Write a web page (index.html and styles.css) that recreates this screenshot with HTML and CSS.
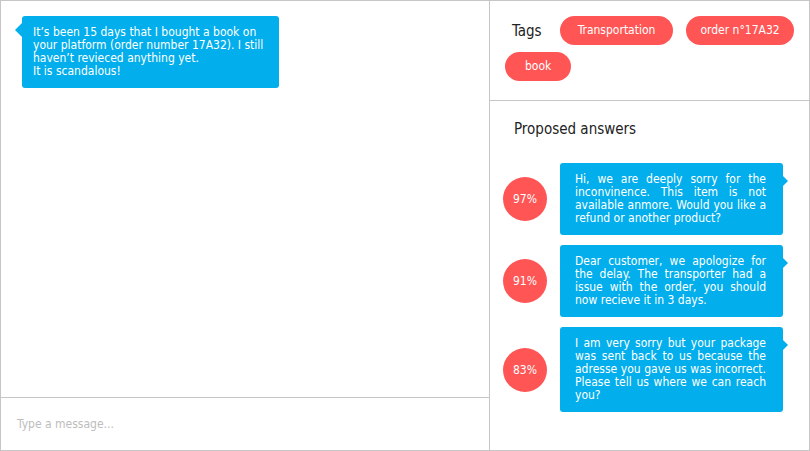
FILE: index.html
```html
<!DOCTYPE html>
<html>
<head>
<meta charset="utf-8">
<link rel="stylesheet" href="styles.css">
</head>
<body>
<div class="app">
  <section class="chat">
    <div class="messages">
      <div class="bubble incoming">It’s been 15 days that I bought a book on your platform (order number 17A32). I still haven’t revieced anything yet.<br>It is scandalous!</div>
    </div>
    <div class="composer">Type a message...</div>
  </section>
  <aside class="side">
    <div class="tags">
      <span class="tags-label">Tags</span>
      <span class="pill">Transportation</span>
      <span class="pill pill-tight">order n°17A32</span>
      <span class="pill pill-wide">book</span>
    </div>
    <div class="answers">
      <h2 class="answers-title">Proposed answers</h2>
      <div class="answer">
        <div class="score">97%</div>
        <div class="bubble outgoing">Hi, we are deeply sorry for the inconvinence. This item is not available anmore. Would you like a refund or another product?</div>
      </div>
      <div class="answer">
        <div class="score">91%</div>
        <div class="bubble outgoing">Dear customer, we apologize for the delay. The transporter had a issue with the order, you should now recieve it in 3 days.</div>
      </div>
      <div class="answer">
        <div class="score">83%</div>
        <div class="bubble outgoing">I am very sorry but your package was sent back to us because the adresse you gave us was incorrect. Please tell us where we can reach you?</div>
      </div>
    </div>
  </aside>
</div>
</body>
</html>
```
FILE: styles.css
```css
* { box-sizing: border-box; }
html, body { margin: 0; padding: 0; background: #fff; }
body {
  font-family: "DejaVu Sans Condensed", "DejaVu Sans", sans-serif;
  font-stretch: semi-condensed;
  font-size: 12px;
  color: #222;
}
.app {
  width: 810px;
  height: 451px;
  border: 1px solid #c6c6c6;
  display: grid;
  grid-template-columns: 489px 1fr;
}
.chat {
  border-right: 1px solid #c6c6c6;
  display: flex;
  flex-direction: column;
}
.messages {
  flex: 1;
  padding: 15px 0 0 21px;
}
.bubble {
  position: relative;
  background: #02aeeb;
  color: #fff;
  border-radius: 3px;
  line-height: 13px;
}
.incoming {
  width: 257px;
  padding: 10px 11px;
}
.incoming::before {
  content: "";
  position: absolute;
  left: -7px;
  top: 7px;
  border-style: solid;
  border-width: 7px 7px 7px 0;
  border-color: transparent #02aeeb transparent transparent;
}
.composer {
  height: 53px;
  border-top: 1px solid #c6c6c6;
  padding: 19px 16px 0;
  color: #bdbdbd;
  line-height: 15px;
}
.side {
  display: flex;
  flex-direction: column;
}
.tags {
  height: 100px;
  border-bottom: 1px solid #c6c6c6;
  display: flex;
  flex-wrap: wrap;
  align-items: center;
  align-content: flex-start;
  gap: 7px 13px;
  padding: 15px 4px 0 15px;
}
.tags-label {
  font-size: 15px;
  margin: 0 5px 0 7px;
  color: #222;
}
.pill {
  height: 29px;
  line-height: 29px;
  padding: 0 18px;
  border-radius: 15px;
  background: #ff5555;
  color: #fff;
}
.pill-tight {
  padding: 0 14px;
}
.pill-wide {
  padding: 0 20px;
}
.answers {
  flex: 1;
  padding: 19px 0 0 13px;
}
.answers-title {
  margin: 0 0 25px 11px;
  font-size: 15px;
  font-weight: normal;
  line-height: 18px;
  color: #222;
}
.answer {
  display: flex;
  align-items: center;
  gap: 13px;
  margin-bottom: 10px;
}
.score {
  width: 44px;
  height: 44px;
  border-radius: 50%;
  background: #ff5555;
  color: #fff;
  display: flex;
  align-items: center;
  justify-content: center;
}
.outgoing {
  width: 223px;
  padding: 10px 17px 10px 15px;
  text-align: justify;
}
.outgoing::after {
  content: "";
  position: absolute;
  right: -5px;
  top: 13px;
  border-style: solid;
  border-width: 5px 0 5px 5px;
  border-color: transparent transparent transparent #02aeeb;
}
```
